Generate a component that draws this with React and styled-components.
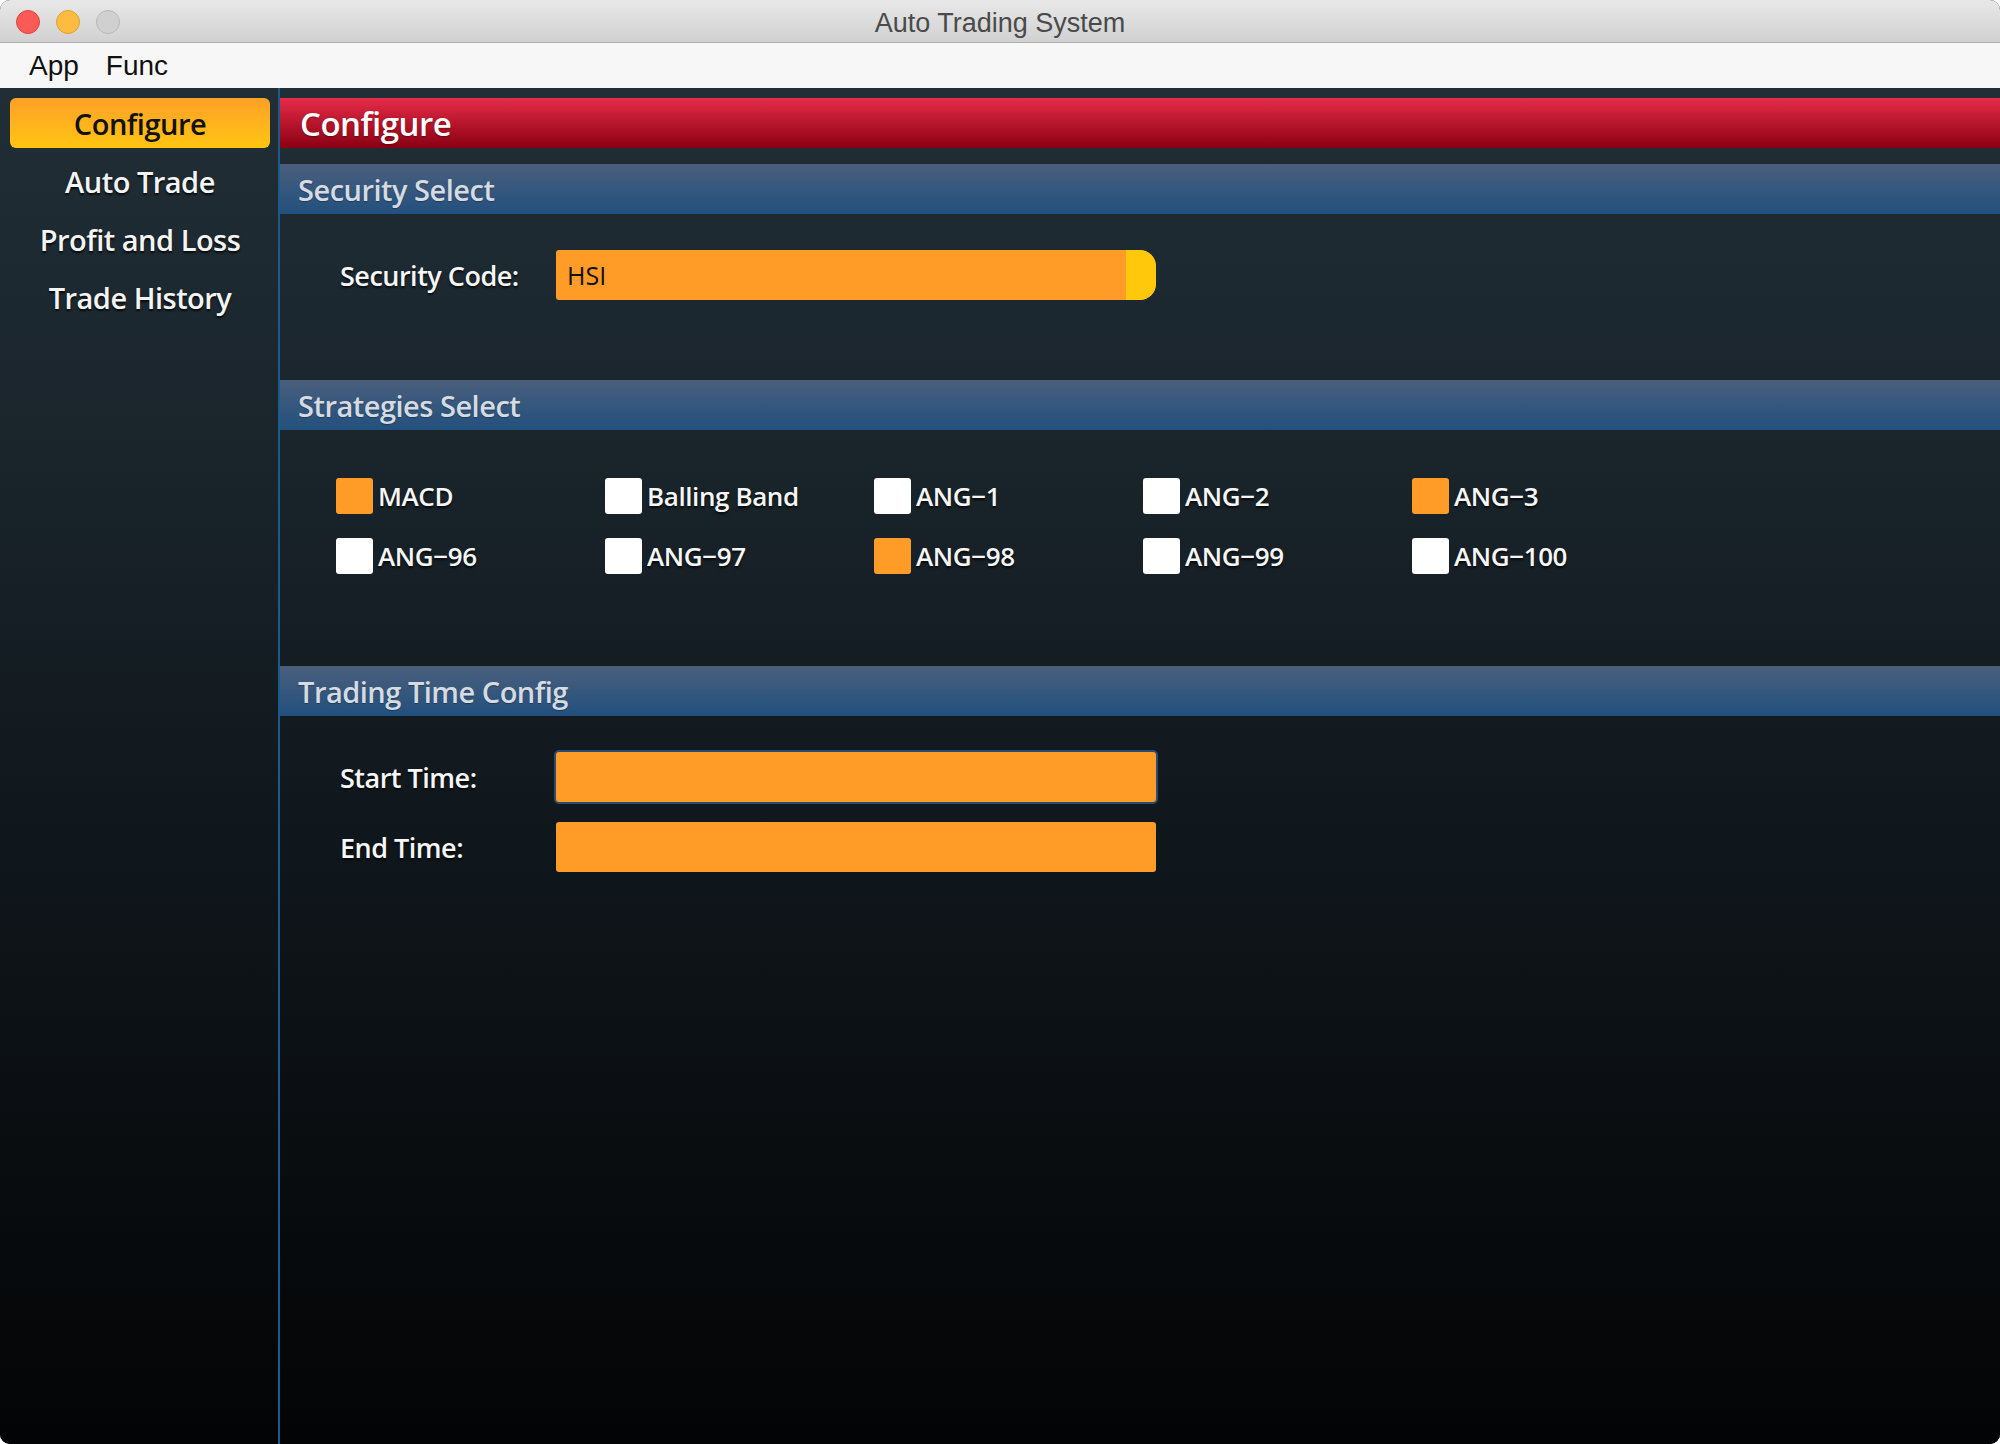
import React from "react";
import styled, { createGlobalStyle } from "styled-components";

const Global = createGlobalStyle`
  html, body { margin: 0; padding: 0; background: #ffffff; }
  body { font-family: "Open Sans", "Noto Sans", sans-serif; }
  * { box-sizing: border-box; }
`;

const Window = styled.div`
  width: 2000px;
  height: 1444px;
  display: flex;
  flex-direction: column;
  border-radius: 10px;
  overflow: hidden;
  background: #030405;
`;

const TitleBar = styled.div`
  height: 43px;
  flex: none;
  display: grid;
  grid-template-columns: 1fr auto 1fr;
  align-items: center;
  background: linear-gradient(to bottom, #e8e8e8, #d1d1d1);
  border-bottom: 1px solid #adadad;
  padding: 1px 16px 0 16px;
`;

const Lights = styled.div`
  display: flex;
  gap: 16px;
  align-items: center;
`;

const Light = styled.span`
  width: 24px;
  height: 24px;
  border-radius: 50%;
  background: ${(p) => p.$fill};
  border: 1px solid ${(p) => p.$edge};
`;

const Title = styled.div`
  font-family: "Liberation Sans", Arial, sans-serif;
  font-size: 27px;
  color: #4a4a4a;
  line-height: 1;
  padding-top: 3px;
`;

const MenuBar = styled.div`
  height: 45px;
  flex: none;
  display: flex;
  align-items: center;
  gap: 27px;
  padding-left: 29px;
  background: #f7f7f7;
`;

const MenuItem = styled.span`
  font-family: "Liberation Sans", Arial, sans-serif;
  font-size: 28px;
  color: #111;
  line-height: 1;
`;

const Body = styled.div`
  flex: 1;
  display: flex;
  background: linear-gradient(to bottom, #212e36 0%, #1a252c 25%, #10171c 55%, #030405 100%);
`;

const Sidebar = styled.nav`
  width: 280px;
  flex: none;
  border-right: 2px solid #1b5b8b;
  padding: 10px 8px 0 10px;
  display: flex;
  flex-direction: column;
  gap: 8px;
`;

const NavItem = styled.div`
  height: 50px;
  border-radius: 6px;
  display: flex;
  align-items: center;
  justify-content: center;
  font-size: 29px;
  font-weight: 600;
  letter-spacing: -0.5px;
  color: ${(p) => (p.$active ? "#111" : "#f4f4f4")};
  background: ${(p) =>
    p.$active ? "linear-gradient(to bottom, #ffa028, #ffc512)" : "transparent"};
  text-shadow: ${(p) => (p.$active ? "none" : "0 2px 2px rgba(0,0,0,0.75)")};
`;

const Main = styled.main`
  flex: 1;
  padding-top: 10px;
  display: flex;
  flex-direction: column;
`;

const PageHeader = styled.div`
  height: 50px;
  display: flex;
  align-items: center;
  padding-left: 20px;
  background: linear-gradient(to bottom, #e62c48, #8a0012);
  color: #ffffff;
  font-size: 33px;
  font-weight: 600;
  letter-spacing: -0.5px;
  text-shadow: 0 1px 2px rgba(0,0,0,0.35);
  margin-bottom: 16px;
`;

const SectionHeader = styled.div`
  height: 50px;
  display: flex;
  align-items: center;
  padding-left: 18px;
  background: linear-gradient(to bottom, #4a5f7c, #22507e);
  color: #d6dbe2;
  font-size: 29px;
  font-weight: 600;
  letter-spacing: -0.5px;
  text-shadow: 0 1px 1px rgba(0,0,0,0.3);
`;

const SectionBody = styled.div`
  height: ${(p) => p.$h}px;
  padding: ${(p) => p.$top}px 0 0 ${(p) => p.$left}px;
  display: flex;
  flex-direction: column;
  gap: ${(p) => p.$gap || 0}px;
`;

const FieldRow = styled.div`
  display: flex;
  align-items: center;
  height: 50px;
`;

const FieldLabel = styled.label`
  width: 216px;
  flex: none;
  color: #f6f6f6;
  font-size: 27px;
  font-weight: 600;
  letter-spacing: -0.5px;
  text-shadow: 0 2px 2px rgba(0,0,0,0.7);
`;

const Field = styled.div`
  width: 600px;
  height: 50px;
  border-radius: 3px;
  background: #ff9c28;
  display: flex;
  align-items: center;
  padding-left: 11px;
  font-size: 25px;
  font-weight: 400;
  color: #111;
  box-shadow: ${(p) => (p.$focused ? "0 0 0 2px #2a4b72" : "none")};
`;

const ComboField = styled(Field)`
  justify-content: space-between;
  padding-right: 0;
  overflow: hidden;
  border-radius: 3px 16px 16px 3px;
`;

const ComboCap = styled.span`
  width: 30px;
  height: 50px;
  background: #ffc80b;
  border-radius: 0 16px 16px 0;
`;

const CheckGrid = styled.div`
  display: grid;
  grid-template-columns: repeat(5, 269px);
  row-gap: 24px;
`;

const CheckItem = styled.div`
  display: flex;
  align-items: center;
  gap: 5px;
  height: 36px;
`;

const Box = styled.span`
  width: 37px;
  height: 36px;
  border-radius: 3px;
  background: ${(p) => (p.$checked ? "#ff9c28" : "#ffffff")};
  flex: none;
`;

const CheckText = styled.span`
  color: #f6f6f6;
  font-size: 26px;
  font-weight: 600;
  letter-spacing: -0.4px;
  text-shadow: 0 2px 2px rgba(0,0,0,0.7);
`;

const strategies = [
  ["MACD", true],
  ["Balling Band", false],
  ["ANG\u22121", false],
  ["ANG\u22122", false],
  ["ANG\u22123", true],
  ["ANG\u221296", false],
  ["ANG\u221297", false],
  ["ANG\u221298", true],
  ["ANG\u221299", false],
  ["ANG\u2212100", false],
];

export default function App() {
  return (
    <>
      <Global />
      <Window>
        <TitleBar>
          <Lights>
            <Light $fill="#fc5a55" $edge="#e0443e" />
            <Light $fill="#fdbb3f" $edge="#dea033" />
            <Light $fill="#d0d0d0" $edge="#b8b8b8" />
          </Lights>
          <Title>Auto Trading System</Title>
          <span />
        </TitleBar>
        <MenuBar>
          <MenuItem>App</MenuItem>
          <MenuItem>Func</MenuItem>
        </MenuBar>
        <Body>
          <Sidebar>
            <NavItem $active>Configure</NavItem>
            <NavItem>Auto Trade</NavItem>
            <NavItem>Profit and Loss</NavItem>
            <NavItem>Trade History</NavItem>
          </Sidebar>
          <Main>
            <PageHeader>Configure</PageHeader>
            <SectionHeader>Security Select</SectionHeader>
            <SectionBody $h={166} $top={36} $left={60}>
              <FieldRow>
                <FieldLabel>Security Code:</FieldLabel>
                <ComboField>
                  HSI
                  <ComboCap />
                </ComboField>
              </FieldRow>
            </SectionBody>
            <SectionHeader>Strategies Select</SectionHeader>
            <SectionBody $h={236} $top={48} $left={56}>
              <CheckGrid>
                {strategies.map(([name, on]) => (
                  <CheckItem key={name}>
                    <Box $checked={on} />
                    <CheckText>{name}</CheckText>
                  </CheckItem>
                ))}
              </CheckGrid>
            </SectionBody>
            <SectionHeader>Trading Time Config</SectionHeader>
            <SectionBody $h={200} $top={36} $left={60} $gap={20}>
              <FieldRow>
                <FieldLabel>Start Time:</FieldLabel>
                <Field $focused />
              </FieldRow>
              <FieldRow>
                <FieldLabel>End Time:</FieldLabel>
                <Field />
              </FieldRow>
            </SectionBody>
          </Main>
        </Body>
      </Window>
    </>
  );
}
